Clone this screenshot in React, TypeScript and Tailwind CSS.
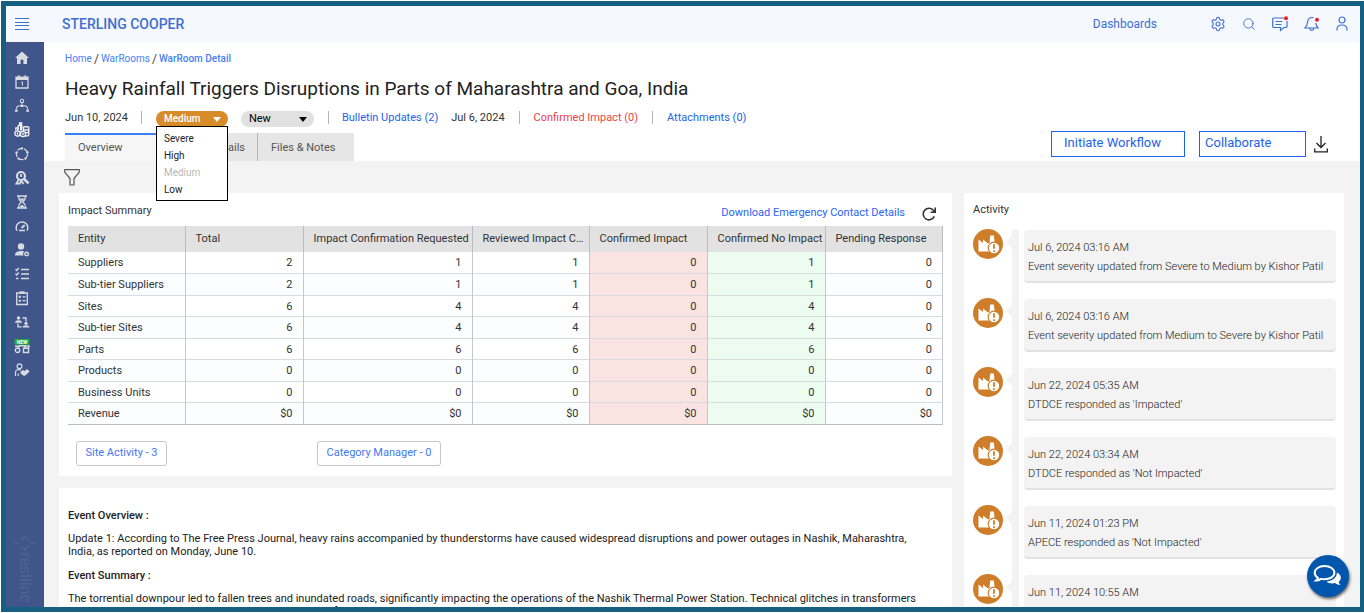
import type { ReactNode } from 'react';
import { Search, Settings } from 'lucide-react';

const SIDEBAR_ICONS: { label: string; icon: ReactNode }[] = [
  {
    label: 'Home',
    icon: <path fill="currentColor" d="M8 1.5 1 8h2v6h3.6V9.8h2.8V14H13V8h2z" />,
  },
  {
    label: 'Calendar',
    icon: (
      <g>
        <path stroke="currentColor" strokeWidth="1.3" d="M2 3.2h12V14H2z" />
        <path fill="currentColor" d="M2 3h12v3H2zM4 1.3h1.5V3H4zM10.5 1.3H12V3h-1.5zM7.2 8l1.2-.6h.5v4.4h-1V8.6l-.7.3z" />
      </g>
    ),
  },
  {
    label: 'Network',
    icon: (
      <g stroke="currentColor" strokeWidth="1.1">
        <circle cx="8" cy="3" r="1.7" />
        <path d="M8 4.7v3M2.3 11.5c0-2.6 1.6-3.8 3.6-3.8h4.2c2 0 3.6 1.2 3.6 3.8" />
        <path d="M1 12.7h2.8M6.6 8h2.8M12.2 12.7H15" strokeWidth="2" />
      </g>
    ),
  },
  {
    label: 'Commodities',
    icon: (
      <g stroke="#f4f4f4" strokeWidth="1.3">
        <circle cx="3.5" cy="11.5" r="2.7" />
        <circle cx="9" cy="12" r="2.6" />
        <path d="M9.5 5.5c0-1 5.3-1 5.3 0v7.4c0 1-2.4 1.2-3.4 1M9.5 5.5v3.6M9.5 7.4c1 .8 4.3.8 5.3 0M11.5 10.3c1 .3 2.5.3 3.3-.2" />
        <path d="M1.8 8.3V5.8h2v2.5M4.2 8V3.8l2.4-1v5.6M5.6 3V1h2v7.5M3.5 10.3v2.4M9 10.8v2.4M6.6 5h2" />
      </g>
    ),
  },
  {
    label: 'Lifecycle',
    icon: (
      <g stroke="currentColor" strokeWidth="1.2">
        <circle cx="8" cy="8" r="5.6" strokeDasharray="4.4 2.6" />
        <g fill="currentColor" stroke="none">
          <circle cx="8" cy="2.4" r="1.2" />
          <circle cx="13.4" cy="6.5" r="1.2" />
          <circle cx="11.4" cy="12.6" r="1.2" />
          <circle cx="4.6" cy="12.6" r="1.2" />
          <circle cx="2.6" cy="6.5" r="1.2" />
        </g>
      </g>
    ),
  },
  {
    label: 'Investigate',
    icon: (
      <g stroke="currentColor">
        <circle cx="7" cy="6" r="4" strokeWidth="2.2" />
        <path d="m10 9 4.6 4.4" strokeWidth="2.6" />
        <path d="M7 4v3M4.5 10 2.4 13.6h3.4l1.4-3M7.5 11l2 3" strokeWidth="1.8" />
      </g>
    ),
  },
  {
    label: 'Pending',
    icon: (
      <g>
        <path
          stroke="currentColor"
          strokeWidth="1.3"
          d="M3 2h10M3 14h10M4.5 2.5c0 3 .8 4 2.7 5.5-1.9 1.5-2.7 2.5-2.7 5.5M11.5 2.5c0 3-.8 4-2.7 5.5 1.9 1.5 2.7 2.5 2.7 5.5"
        />
        <path fill="currentColor" d="M5.5 4.6h5L8 7.5zM5 13.5l3-3 3 3z" />
      </g>
    ),
  },
  {
    label: 'Performance',
    icon: (
      <g stroke="currentColor" strokeWidth="1.5">
        <path d="M3 12.6a5.8 5.8 0 0 1-.8-3.1C2.2 6.3 4.8 4 8 4s5.8 2.3 5.8 5.5c0 1.2-.3 2.2-.8 3.1M5 12.6h6" />
        <path d="m7.5 10 3.2-3" strokeWidth="1.8" />
      </g>
    ),
  },
  {
    label: 'User settings',
    icon: (
      <g>
        <circle cx="7" cy="4.5" r="3.2" fill="currentColor" />
        <path fill="currentColor" d="M1 13.5C1 10 4 9 7 9c1.2 0 2.3.1 3.2.5-1 1-1.3 2.6-.7 4z" />
        <circle cx="12.6" cy="12" r="1.8" stroke="currentColor" strokeWidth="1.4" />
      </g>
    ),
  },
  {
    label: 'Tasks',
    icon: (
      <path
        stroke="currentColor"
        strokeWidth="1.3"
        d="M7 3.5h8M7 8h8M7 12.5h8M1.5 3.3l1.2 1.2 2-2.5M1.5 7.8l1.2 1.2 2-2.5M2 12.5h2.4"
      />
    ),
  },
  {
    label: 'Assessments',
    icon: (
      <g stroke="currentColor" strokeWidth="1.3">
        <path d="M2.7 3h10.6v11.5H2.7zM8.5 6.8h3M8.5 10.7h3" />
        <path d="M5.5 2.5h5" strokeWidth="2.4" />
        <path d="M4.7 6.8h2.2M4.7 10.7h2.2" strokeWidth="2" />
      </g>
    ),
  },
  {
    label: 'Collaboration',
    icon: (
      <g>
        <circle cx="4.5" cy="4" r="1.7" fill="currentColor" />
        <circle cx="12" cy="9.4" r="1.6" fill="currentColor" />
        <path fill="currentColor" d="M1 8.8c0-3.3 7-3.3 7 0zM8.5 13.6c0-3.2 7-3.2 7 0z" />
        <path stroke="currentColor" strokeWidth="1.3" d="M8.5 4H12v3.5M7.5 12.8H4V9.5" />
      </g>
    ),
  },
  {
    label: 'New sub-tier map',
    icon: (
      <g>
        <g stroke="currentColor" strokeWidth="1.4">
          <circle cx="3.5" cy="12.3" r="2.2" />
          <path d="M9.5 10.3h5v4.2h-5zM4 10l1.5-2.2h5l1 2.2M1 8.2h4M10 8h5v2" />
        </g>
        <path fill="#1faa3c" d="M.6 1h14.8v5.7H.6z" />
        <text x="8" y="5.8" textAnchor="middle" fontSize="5" fontWeight="700" fill="#fff" fontFamily="Roboto, sans-serif">
          NEW
        </text>
      </g>
    ),
  },
  {
    label: 'Partners',
    icon: (
      <g>
        <circle cx="5.5" cy="4.2" r="2.4" stroke="currentColor" strokeWidth="1.2" />
        <path stroke="currentColor" strokeWidth="1.2" d="M1.5 14v-3.5c0-2 1.5-3 3.5-3l2 1M4.2 14v-2.5" />
        <path fill="currentColor" d="m6 10.5 3-2.5 1.8 1L13 7l2.6 2.6-4.6 4.2-2-.3z" />
      </g>
    ),
  },
];

const SEVERITIES = ['Severe', 'High', 'Medium', 'Low'];

const COLUMNS = [
  'Entity',
  'Total',
  'Impact Confirmation Requested',
  'Reviewed Impact Confirmation',
  'Confirmed Impact',
  'Confirmed No Impact',
  'Pending Response',
];

const ROWS = [
  ['Suppliers', '2', '1', '1', '0', '1', '0'],
  ['Sub-tier Suppliers', '2', '1', '1', '0', '1', '0'],
  ['Sites', '6', '4', '4', '0', '4', '0'],
  ['Sub-tier Sites', '6', '4', '4', '0', '4', '0'],
  ['Parts', '6', '6', '6', '0', '6', '0'],
  ['Products', '0', '0', '0', '0', '0', '0'],
  ['Business Units', '0', '0', '0', '0', '0', '0'],
  ['Revenue', '$0', '$0', '$0', '$0', '$0', '$0'],
];

const ACTIVITY = [
  { time: 'Jul 6, 2024 03:16 AM', text: 'Event severity updated from Severe to Medium by Kishor Patil' },
  { time: 'Jul 6, 2024 03:16 AM', text: 'Event severity updated from Medium to Severe by Kishor Patil' },
  { time: 'Jun 22, 2024 05:35 AM', text: "DTDCE responded as 'Impacted'" },
  { time: 'Jun 22, 2024 03:34 AM', text: "DTDCE responded as 'Not Impacted'" },
  { time: 'Jun 11, 2024 01:23 PM', text: "APECE responded as 'Not Impacted'" },
  { time: 'Jun 11, 2024 10:55 AM', text: "APECE responded as 'Impacted'" },
];

function cellTone(col: number): string {
  if (col === 4) return 'bg-[#fae3e1]';
  if (col === 5) return 'bg-[#edfcf0]';
  return '';
}

function Header() {
  return (
    <header className="flex h-9 shrink-0 items-center bg-[#f5f8ff] pr-3 pl-2 text-[#3f6fd0]">
      <button type="button" aria-label="Toggle menu" className="w-4">
        <svg viewBox="0 0 16 14" className="h-[14px] w-4" stroke="currentColor" strokeWidth="1">
          <path d="M1 1.5h14M1 5.5h14M1 8.5h14M1 12.5h14" />
        </svg>
      </button>
      <span className="ml-8 text-sm font-medium">STERLING COOPER</span>
      <nav className="ml-auto flex items-center">
        <a href="#dashboards" className="mr-[53px] text-xs">
          Dashboards
        </a>
        <div className="flex items-center gap-4">
          <button type="button" aria-label="Settings">
            <Settings className="size-4" strokeWidth={1.6} />
          </button>
          <button type="button" aria-label="Search">
            <Search className="size-[14px]" strokeWidth={1.6} />
          </button>
          <button type="button" aria-label="Messages">
            <svg viewBox="0 0 16 16" className="size-4" fill="none" stroke="currentColor" strokeWidth="1.2">
              <path d="M12 2H2A1.300 1.300 0 0 0 .7 3.300v6.900A1.300 1.300 0 0 0 2 11.500h6.500v3l3.300-3h1.900a1.300 1.300 0 0 0 1.300-1.300V5" />
              <path d="M3.500 5.500h7M3.500 8.500h6" />
              <circle cx="14" cy="2.200" r="2" fill="#ee1c25" stroke="none" />
            </svg>
          </button>
          <button type="button" aria-label="Notifications">
            <svg viewBox="0 0 16 16" className="size-4" fill="none" stroke="currentColor" strokeWidth="1.2">
              <path d="M9.500 1.700C6 .8 3.600 3 3.600 5.800c0 3-.8 4.200-2.600 6.200h13c-1.300-1.500-2-2.800-2.200-5M5.600 12.200c.3 2.800 3.900 2.800 4.200 0" />
              <circle cx="13" cy="3.800" r="2" fill="#ee1c25" stroke="none" />
            </svg>
          </button>
          <button type="button" aria-label="Account">
            <svg viewBox="0 0 12 16" className="h-4 w-3" fill="none" stroke="currentColor" strokeWidth="1.2">
              <circle cx="6" cy="4" r="3" />
              <path d="M1 14.500v-1.200C1 10.500 3 9 6 9s5 1.500 5 4.300v1.200" />
            </svg>
          </button>
        </div>
      </nav>
    </header>
  );
}

function Sidebar() {
  return (
    <aside className="flex w-[38px] shrink-0 flex-col items-center justify-between bg-[#40568a] pt-2 pb-1 text-[#d8dbe2]">
      <nav className="flex flex-col items-center gap-2">
        {SIDEBAR_ICONS.map(({ label, icon }) => (
          <a key={label} href="#menu" aria-label={label} className="-ml-[6px] block size-4">
            <svg viewBox="0 0 16 16" fill="none" className="size-4">
              {icon}
            </svg>
          </a>
        ))}
      </nav>
      <div className="flex items-center text-base leading-5 text-[#4e6297] [writing-mode:vertical-rl]">
        <svg viewBox="0 0 24 18" className="h-[18px] w-6" fill="none" stroke="currentColor" strokeWidth="1.5">
          <path d="M8 6l4-4 4 4M8 12l4 4 4-4M1 9h5M18 9h5" />
        </svg>
        <span>resilinc</span>
      </div>
    </aside>
  );
}

function Divider() {
  return <span className="h-[13px] w-px bg-[#b5b5b5]" />;
}

function Caret() {
  return (
    <svg viewBox="0 0 8 5" className="pointer-events-none absolute top-[6px] right-[7px] h-[5px] w-2" fill="currentColor">
      <path d="M0 0h8L4 5z" />
    </svg>
  );
}

/** Severity pill with its list of levels open below it */
function SeveritySelect() {
  return (
    <div className="relative w-[72px] text-white">
      <select
        aria-label="Severity"
        defaultValue="Medium"
        className="h-4 w-full appearance-none rounded-full bg-[#d78b29] pl-2 text-[10px] leading-4 font-medium"
      >
        {SEVERITIES.map((level) => (
          <option key={level}>{level}</option>
        ))}
      </select>
      <Caret />
      <ul
        role="listbox"
        aria-label="Severity levels"
        className="absolute top-[15px] left-0 z-10 w-full border border-black bg-white pt-[3px] pb-[2px] pl-[7px] text-[10px] leading-[17px] text-[#222]"
      >
        {SEVERITIES.map((level) => (
          <li
            key={level}
            role="option"
            aria-selected={level === 'Medium'}
            className={level === 'Medium' ? 'text-[#b9b9b9]' : ''}
          >
            {level}
          </li>
        ))}
      </ul>
    </div>
  );
}

function StatusSelect() {
  return (
    <div className="relative w-[73px] text-black">
      <select
        aria-label="Status"
        defaultValue="New"
        className="h-4 w-full appearance-none rounded-full bg-[#e1e1e1] pl-2 text-[11px] leading-4"
      >
        <option>New</option>
        <option>Closed</option>
      </select>
      <Caret />
    </div>
  );
}

function PageHead() {
  return (
    <div className="flex items-end justify-between bg-white pr-8 pl-[21px]">
      <div className="min-w-0">
        <nav aria-label="Breadcrumb" className="flex gap-[2px] pt-[10px] text-[10px] leading-[14px] text-[#4680f5]">
          <a href="#home">Home</a>
          <span className="text-xs leading-[14px] text-[#444]">/</span>
          <a href="#warrooms">WarRooms</a>
          <span className="text-xs leading-[14px] text-[#444]">/</span>
          <a href="#detail" className="font-medium">
            WarRoom Detail
          </a>
        </nav>
        <h1 className="mt-[11px] text-[19px] leading-6 text-[#222]">
          Heavy Rainfall Triggers Disruptions in Parts of Maharashtra and Goa, India
        </h1>
        <div className="mt-[7px] flex h-[19px] items-center text-[11px] leading-4 text-[#333]">
          <span className="mr-[13px]">Jun 10, 2024</span>
          <Divider />
          <div className="mx-[14px] flex gap-[13px] self-end">
            <SeveritySelect />
            <StatusSelect />
          </div>
          <Divider />
          <a href="#bulletins" className="mx-[13px] text-[#2563eb]">
            Bulletin Updates (2)
          </a>
          <span className="mr-[14px]">Jul 6, 2024</span>
          <Divider />
          <a href="#impact" className="mx-[14px] text-[#ee3f47]">
            Confirmed Impact (0)
          </a>
          <Divider />
          <a href="#attachments" className="ml-[14px] text-[#2563eb]">
            Attachments (0)
          </a>
        </div>
        <div role="tablist" className="mt-[6px] flex h-7 text-[11px] text-[#555]">
          <button type="button" role="tab" aria-selected className="w-[92px] border-t-2 border-[#3b7ff5] bg-[#f6f6f6] pl-[13px] text-left">
            Overview
          </button>
          <button type="button" role="tab" className="w-[101px] border-r border-[#b3b3b3] bg-[#e6e6e6] pt-[2px] pr-3 text-right">
            Impact Details
          </button>
          <button type="button" role="tab" className="w-24 bg-[#e6e6e6] pt-[2px] pl-[13px] text-left">
            Files &amp; Notes
          </button>
        </div>
      </div>
      <div className="mb-1 flex items-center text-[13px] text-[#2463eb]">
        <button type="button" className="h-[26px] w-[134px] border border-[#1c62f2] pb-[2px] pl-3 text-left">
          Initiate Workflow
        </button>
        <button type="button" className="ml-[14px] h-[26px] w-[107px] border border-[#1c62f2] pb-[2px] pl-[5px] text-left">
          Collaborate
        </button>
        <button type="button" aria-label="Download" className="ml-2 text-[#222]">
          <svg viewBox="0 0 14 17" className="h-[17px] w-[14px]" fill="none" stroke="currentColor" strokeWidth="1.3">
            <path d="M7 0v11M2.500 7 7 11.500 11.500 7M.7 12.500V15.800h12.600V12.500" />
          </svg>
        </button>
      </div>
    </div>
  );
}

function ImpactTable() {
  return (
    <table className="w-full table-fixed border-collapse text-[11px] leading-4 text-[#333]">
      <colgroup>
        <col className="w-[117px]" />
        <col className="w-[118px]" />
        <col className="w-[169px]" />
        <col className="w-[117px]" />
        <col className="w-[118px]" />
        <col className="w-[118px]" />
        <col />
      </colgroup>
      <thead>
        <tr className="h-[26px] bg-[#e2e2e2]">
          {COLUMNS.map((name) => (
            <th key={name} className="truncate border-r border-[#b8bfc4] pl-[10px] text-left font-normal">
              {name}
            </th>
          ))}
        </tr>
      </thead>
      <tbody>
        {ROWS.map((row) => (
          <tr
            key={row[0]}
            className="h-[21px] border-b border-[#d8dbdf] last:border-[#b8bfc4] even:h-[22px] even:bg-[#fbfdff]"
          >
            {row.map((value, col) => (
              <td
                key={COLUMNS[col]}
                className={`border-r border-[#c3c8cc] pt-[2px] ${col === 0 ? 'pl-[10px]' : 'pr-[10px] text-right'} ${cellTone(col)}`}
              >
                {value}
              </td>
            ))}
          </tr>
        ))}
      </tbody>
    </table>
  );
}

function ImpactSummary() {
  return (
    <section className="h-[283px] bg-white px-[9px] pt-2">
      <div className="flex h-[25px] items-center justify-between">
        <h2 className="pb-1 text-[11px] text-[#333]">Impact Summary</h2>
        <div className="flex items-center gap-4 pr-[6px]">
          <a href="#contacts" className="text-[11px] text-[#2b63f6]">
            Download Emergency Contact Details
          </a>
          <button type="button" aria-label="Refresh" className="text-[#333]">
            <svg viewBox="0 0 16 16" className="size-4" fill="none" stroke="currentColor" strokeWidth="1.6">
              <path d="M13.300 10.400A5.800 5.800 0 1 1 12.600 4.500L14 6M14.200 1.500v4.700H9.600" />
            </svg>
          </button>
        </div>
      </div>
      <ImpactTable />
      <div className="mt-4 flex gap-[150px] pl-2 text-[11px] text-[#3f78f2]">
        <button type="button" className="h-[25px] w-[91px] rounded-[3px] border border-[#c6c6c6]">
          Site Activity - 3
        </button>
        <button type="button" className="h-[25px] w-[124px] rounded-[3px] border border-[#c6c6c6]">
          Category Manager - 0
        </button>
      </div>
    </section>
  );
}

function EventOverview() {
  return (
    <section className="bg-white pt-[21px] pr-[26px] pl-[9px] text-[11px] leading-[13px] text-[#222]">
      <h3 className="font-medium">Event Overview :</h3>
      <p className="mt-[10px]">
        Update 1: According to The Free Press Journal, heavy rains accompanied by thunderstorms have caused widespread
        disruptions and power outages in Nashik, Maharashtra, India, as reported on Monday, June 10.
      </p>
      <h3 className="mt-[11px] font-medium">Event Summary :</h3>
      <p className="mt-[10px]">
        The torrential downpour led to fallen trees and inundated roads, significantly impacting the operations of the
        Nashik Thermal Power Station. Technical glitches in transformers have resulted in power outages, leading to
        disruptions for local businesses.
      </p>
    </section>
  );
}

function FactoryBadge() {
  return (
    <svg viewBox="0 0 30 30" className="size-[30px] shrink-0">
      <circle cx="15" cy="15" r="15" fill="#ce7e2b" />
      <path d="M5.500 22.500V10.500l4.500 3.500V10.500l5 4 1.500-.5.700-7.500h3.600l1 8V22.500z" fill="#fff" />
      <circle cx="21" cy="19" r="5.800" fill="#fff" stroke="#ce7e2b" strokeWidth="1.2" />
      <path d="M21 15.300v4.500M21 21.200v1.800" stroke="#ce7e2b" strokeWidth="1.8" />
    </svg>
  );
}

function Activity() {
  return (
    <section className="bg-white pr-2 pl-[9px]">
      <h2 className="pt-[9px] text-[11px] leading-4 text-[#333]">Activity</h2>
      <ul className="mt-[11px]">
        {ACTIVITY.map(({ time, text }, i) => (
          <li key={i} className="flex h-[69px] text-[11px] text-[#222]">
            <FactoryBadge />
            <svg viewBox="0 0 6 12" className="mt-[7px] ml-[3px] h-3 w-[6px]">
              <path d="M6 0v12L0 6z" fill="#f3f3f3" />
            </svg>
            <span className={`w-[7px] bg-[#f3f3f3] ${i === 0 ? 'rounded-t' : ''}`} />
            <div className="mt-px ml-[5px] h-[53px] flex-1 rounded border-b-2 border-[#e2e2e2] bg-[#f3f3f3] pt-2 pl-1 leading-[19px] font-light">
              <p>{time}</p>
              <p>{text}</p>
            </div>
          </li>
        ))}
      </ul>
    </section>
  );
}

function ChatButton() {
  return (
    <button
      type="button"
      aria-label="Open chat"
      className="absolute right-[11px] bottom-[10px] flex size-[42px] items-center justify-center rounded-full bg-[#0055ad] shadow-[1px_2px_3px_rgba(0,0,0,0.6)]"
    >
      <svg viewBox="0 0 30 24" className="h-6 w-[30px]" fill="none">
        <path
          d="M11.500 2C5.800 2 1.700 5 1.700 8.700c0 2.100 1.200 3.900 3.200 5.100-.3 1.200-1 2-1.900 2.800 2 0 3.700-.7 5-1.700 1.100.3 2.300.4 3.500.4 5.700 0 9.900-2.900 9.900-6.600S17.200 2 11.500 2z"
          stroke="#fff"
          strokeWidth="2"
        />
        <path
          d="M23.800 8.500c.5 4.800-4.300 8.600-10.500 8.900 1.800 1.700 5.400 2.500 8.700 1.700 1.500 1.200 3.300 1.900 5.500 1.900-1-.9-1.700-1.900-1.900-3 3.400-2.500 3.200-7.300-1.800-9.500z"
          fill="#fff"
        />
      </svg>
    </button>
  );
}

export default function App() {
  return (
    <div className="h-screen bg-white pt-px pb-px pl-px font-[Roboto,sans-serif]">
      <div className="relative flex h-full flex-col overflow-hidden border-[5px] border-r-4 border-[#156082]">
        <Header />
        <div className="flex min-h-0 flex-1">
          <Sidebar />
          <main className="min-w-0 flex-1 overflow-hidden bg-[#f3f3f3]">
            <PageHead />
            <button type="button" aria-label="Filter" className="mt-2 ml-5 flex h-6 items-start text-[#555]">
              <svg viewBox="0 0 16 17" className="h-[17px] w-4" fill="none" stroke="currentColor" strokeWidth="1.2">
                <path d="M.7.700h14.600v2.500L10 9.500V16H6V9.500L.7 3.200z" strokeLinejoin="round" />
              </svg>
            </button>
            <div className="grid grid-cols-[minmax(0,1fr)_380px] gap-3 pr-4 pl-[15px]">
              <div className="flex flex-col gap-3">
                <ImpactSummary />
                <EventOverview />
              </div>
              <Activity />
            </div>
          </main>
        </div>
        <ChatButton />
      </div>
    </div>
  );
}
